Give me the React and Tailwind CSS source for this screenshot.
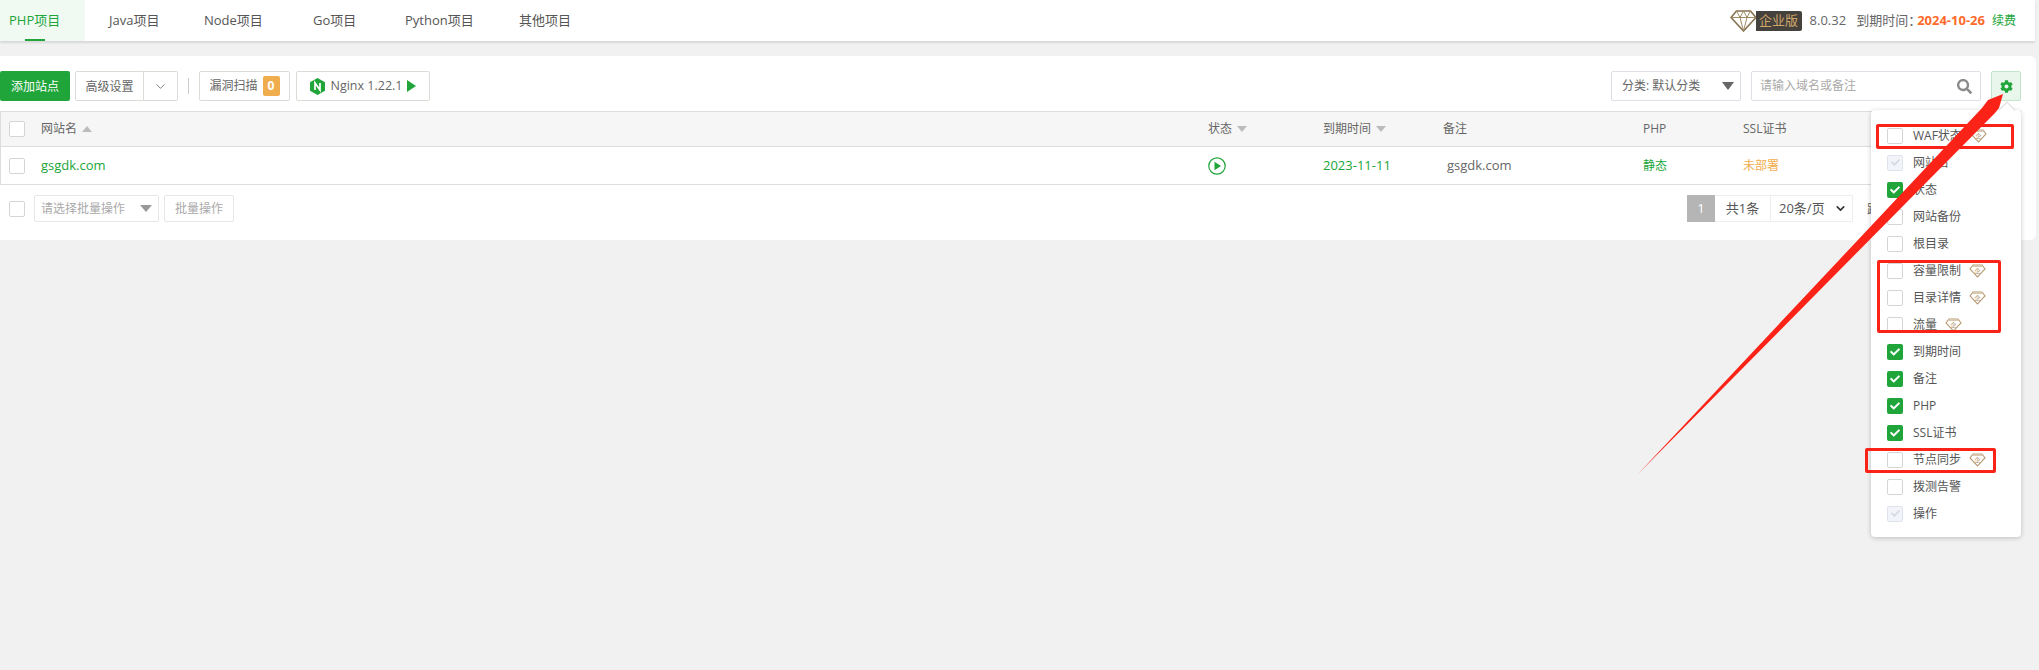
import React from 'react';
import { FaCog, FaSearch, FaCheck } from 'react-icons/fa';
import { LuChevronDown } from 'react-icons/lu';

const tabs = [
  { label: 'PHP项目', width: 'w-[85px]' },
  { label: 'Java项目', width: 'w-[119px]' },
  { label: 'Node项目', width: 'w-[109px]' },
  { label: 'Go项目', width: 'w-[92px]' },
  { label: 'Python项目', width: 'w-[114px]' },
  { label: '其他项目', width: 'w-[100px]' },
];

const columns = [
  { label: 'WAF状态', state: 'off', vip: 8 },
  { label: '网站名', state: 'locked' },
  { label: '状态', state: 'on' },
  { label: '网站备份', state: 'off' },
  { label: '根目录', state: 'off' },
  { label: '容量限制', state: 'off', vip: 8 },
  { label: '目录详情', state: 'off', vip: 8 },
  { label: '流量', state: 'off', vip: 8 },
  { label: '到期时间', state: 'on' },
  { label: '备注', state: 'on' },
  { label: 'PHP', state: 'on' },
  { label: 'SSL证书', state: 'on' },
  { label: '节点同步', state: 'off', vip: 8 },
  { label: '拨测告警', state: 'off' },
  { label: '操作', state: 'locked' },
];

const rowGrid = 'grid grid-cols-[40px_1167px_115px_120px_200px_100px_1fr] items-center';

const Checkbox = ({ state = 'off' }) => {
  if (state === 'on') {
    return (
      <span className="flex h-4 w-4 shrink-0 items-center justify-center rounded-[2px] bg-[#20a53a] text-white">
        <FaCheck size={10} />
      </span>
    );
  }
  if (state === 'locked') {
    return (
      <span className="flex h-4 w-4 shrink-0 items-center justify-center rounded-[2px] border border-[#dfe3ee] bg-[#f2f4fa] text-[#d5d9e4]">
        <FaCheck size={9} />
      </span>
    );
  }
  return <span className="block h-4 w-4 shrink-0 rounded-[2px] border border-[#d5d5d5] bg-white" />;
};

const VipDiamond = () => (
  <svg width="17" height="14" viewBox="0 0 17 14" className="shrink-0">
    <path d="M4 1h9l3 4-7.500 8L1 5z" fill="#fff" stroke="#b89b74" strokeWidth="1.100" />
    <path d="M4 1h9l1 2H3z" fill="#d8c8ae" />
    <text x="8.500" y="8.800" fontSize="6" textAnchor="middle" fill="#b89b74">企</text>
  </svg>
);

const BigDiamond = () => (
  <svg width="27" height="22" viewBox="0 0 27 22" className="shrink-0 -mr-px">
    <path d="M6.500 1h14L26 7.500 13.500 21 1 7.500z" fill="#fff" stroke="#85704f" strokeWidth="1.600" />
    <path d="M1 7.500h25M6.500 1l3.500 6.500L13.500 21 17 7.500 20.500 1M10 7.500 13.500 1 17 7.500" fill="none" stroke="#a08a63" strokeWidth="1" />
  </svg>
);

const SortArrow = ({ up }) => (
  <span className={`ml-[5px] inline-block h-0 w-0 border-x-[5px] border-x-transparent ${up ? 'border-b-[6px] border-b-[#bcbcbc]' : 'border-t-[6px] border-t-[#bcbcbc]'}`} />
);

const ColumnMenu = () => (
  <div className="absolute left-[1871px] top-[110px] w-[150px] rounded-[4px] bg-white pb-[10px] pl-4 pt-3 shadow-[0_1px_5px_rgba(0,0,0,0.22)]">
    <span className="absolute right-[8px] top-[-6px] h-3 w-3 rotate-45 border-l border-t border-[#dcdcdc] bg-white" />
    {columns.map(col => (
      <div key={col.label} className="flex h-[27px] items-center">
        <Checkbox state={col.state} />
        <span className="ml-[10px] text-[12px] text-[#555]">{col.label}</span>
        {col.vip && <span className="ml-[8px]"><VipDiamond /></span>}
      </div>
    ))}
  </div>
);

const Annotations = () => (
  <>
    {/* red marker boxes drawn over the screenshot */}
    <div className="absolute left-[1876px] top-[124px] h-[25px] w-[138px] rounded-[2px] border-[3px] border-[#fb2317]" />
    <div className="absolute left-[1877px] top-[260px] h-[73px] w-[124px] rounded-[2px] border-[3px] border-[#fb2317]" />
    <div className="absolute left-[1865px] top-[448px] h-[25px] w-[131px] rounded-[2px] border-[3px] border-[#fb2317]" />
    <svg width="2039" height="670" className="pointer-events-none absolute left-0 top-0">
      <polygon points="1637,475 1982,108 1988,100 2003,94 1999,108 1995,113" fill="#fb2317" />
    </svg>
  </>
);

export default function App() {
  return (
    <div className="relative h-[670px] w-full overflow-hidden bg-[#f1f1f1] font-['Open_Sans','Noto_Sans_CJK_SC',sans-serif] text-[12px] text-[#666]">
      {/* Top tabs */}
      <div className="mr-[4px] flex h-[41px] items-stretch bg-white shadow-[0_2px_2px_rgba(0,0,0,0.1)]">
        {tabs.map((tab, i) => (
          <div
            key={tab.label}
            className={`relative flex items-center text-[13px] ${tab.width} ${i === 0 ? 'bg-[#f0f9f2] pl-[9px] text-[#20a53a]' : 'text-[#555]'} ${i === 1 ? 'pl-[24px]' : ''}`}
          >
            {tab.label}
            {i === 0 && <span className="absolute bottom-0 left-[25px] h-[2px] w-[20px] bg-[#20a53a]" />}
          </div>
        ))}
        <div className="ml-auto flex items-center pr-[19px] text-[13px]">
          <BigDiamond />
          <span className="mr-[8px] flex h-[20px] w-[46px] items-center justify-center rounded-r-[2px] bg-[#45413c] text-[#d0a76a]">企业版</span>
          <span className="mr-[10px]">8.0.32</span>
          <span>到期时间：</span>
          <span className="ml-[-4px] mr-[7px] font-bold text-[#ff6a2b]">2024-10-26</span>
          <span className="text-[12px] text-[#20a53a]">续费</span>
        </div>
      </div>

      {/* Main panel */}
      <div className="mr-[3px] mt-[15px] h-[184px] rounded-r-[6px] bg-white pr-[15px] pt-[15px]">
        <div className="flex h-[30px] items-stretch">
          <button className="w-[70px] rounded-[2px] bg-[#20a53a] pt-px text-white">添加站点</button>
          <button className="ml-[5px] w-[69px] rounded-l-[2px] border border-[#dcdcd6] pt-px text-[#666]">高级设置</button>
          <button className="flex w-[34px] items-center justify-center rounded-r-[2px] border border-l-0 border-[#dcdcd6] text-[#666]">
            <LuChevronDown size={15} strokeWidth={1.300} />
          </button>
          <span className="mx-[10px] my-[7px] w-px bg-[#ccc]" />
          <button className="flex w-[91px] items-center justify-center gap-[5px] rounded-[2px] border border-[#dcdcd6]">
            漏洞扫描
            <span className="flex h-[20px] w-[17px] items-center justify-center rounded-[2px] bg-[#f0ad4e] font-bold text-white">0</span>
          </button>
          <button className="ml-[6px] flex w-[134px] items-center justify-center rounded-[2px] border border-[#dcdcd6] text-[12.500px]">
            <svg width="15" height="17" viewBox="0 0 15 17" className="mr-[6px]">
              <path d="M7.500 0 15 4.200v8.600L7.500 17 0 12.800V4.200z" fill="#20a53a" />
              <path d="M5 12V5l5 7V5" fill="none" stroke="#fff" strokeWidth="1.700" />
            </svg>
            Nginx 1.22.1
            <span className="ml-[5px] h-0 w-0 border-y-[6px] border-l-[9px] border-y-transparent border-l-[#20a53a]" />
          </button>

          <div className="ml-auto flex w-[130px] items-center justify-between rounded-[2px] border border-[#dcdfe6] pl-[10px] pr-[6px]">
            <span>分类: 默认分类</span>
            <span className="h-0 w-0 border-x-[6px] border-t-[8px] border-x-transparent border-t-[#666]" />
          </div>
          <div className="ml-[10px] flex w-[230px] items-center justify-between rounded-[2px] border border-[#dcdfe6] pl-[8px] pr-[8px]">
            <span className="text-[#aaa]">请输入域名或备注</span>
            <FaSearch size={15} className="text-[#8a8a8a]" />
          </div>
          <button className="ml-[10px] flex w-[30px] items-center justify-center rounded-[2px] border border-[#c3e6ca] bg-[#e8f6eb] text-[#20a53a]">
            <FaCog size={13} />
          </button>
        </div>

        {/* Table */}
        <div className="mt-[10px] border border-[#ddd]">
          <div className={`${rowGrid} h-[35px] border-b border-[#ddd] bg-[#f6f6f6] text-[#666]`}>
            <span className="pl-[8px]"><Checkbox /></span>
            <span className="flex items-center">网站名<SortArrow up /></span>
            <span className="flex items-center">状态<SortArrow /></span>
            <span className="flex items-center">到期时间<SortArrow /></span>
            <span>备注</span>
            <span>PHP</span>
            <span>SSL证书</span>
          </div>
          <div className={`${rowGrid} h-[37px] text-[13px]`}>
            <span className="pl-[8px]"><Checkbox /></span>
            <span className="pt-px text-[#20a53a]">gsgdk.com</span>
            <span>
              <svg width="18" height="18" viewBox="0 0 18 18" className="block">
                <circle cx="9" cy="9" r="8.200" fill="none" stroke="#20a53a" strokeWidth="1.200" />
                <path d="M6.500 4.800 13 9l-6.500 4.200z" fill="#20a53a" />
              </svg>
            </span>
            <span className="text-[#20a53a]">2023-11-11</span>
            <span className="pl-[4px]">gsgdk.com</span>
            <span className="text-[12px] text-[#20a53a]">静态</span>
            <span className="flex items-center justify-between text-[12px] text-[#f0ad4e]">
              未部署
              <span className="text-[#20a53a]">统</span>
            </span>
          </div>
        </div>

        {/* Footer */}
        <div className="mt-[10px] flex h-[27px] items-center">
          <span className="pl-[9px]"><Checkbox /></span>
          <div className="ml-[9px] flex h-full w-[125px] items-center justify-between rounded-[2px] border border-[#e6e6e6] pl-[6px] pr-[6px] text-[#aaa]">
            请选择批量操作
            <span className="h-0 w-0 border-x-[6px] border-t-[7px] border-x-transparent border-t-[#999]" />
          </div>
          <button className="ml-[5px] h-full w-[70px] rounded-[2px] border border-[#e6e6e6] text-[#aaa]">批量操作</button>
          <div className="ml-auto mr-[-2px] flex h-full w-[336px] items-stretch text-[13px]">
            <span className="flex w-[28px] items-center justify-center bg-[#b5b5b5] text-white">1</span>
            <span className="flex w-[55px] items-center justify-center border-y border-[#eee] text-[#555]">共1条</span>
            <span className="flex w-[83px] items-center justify-between border border-[#eee] pl-[8px] pr-[5px] text-[#555]">
              20条/页
              <LuChevronDown size={13} strokeWidth={3} className="text-[#333]" />
            </span>
            <span className="ml-[14px] flex items-center">跳转</span>
          </div>
        </div>
      </div>

      <ColumnMenu />
      <Annotations />
    </div>
  );
}
